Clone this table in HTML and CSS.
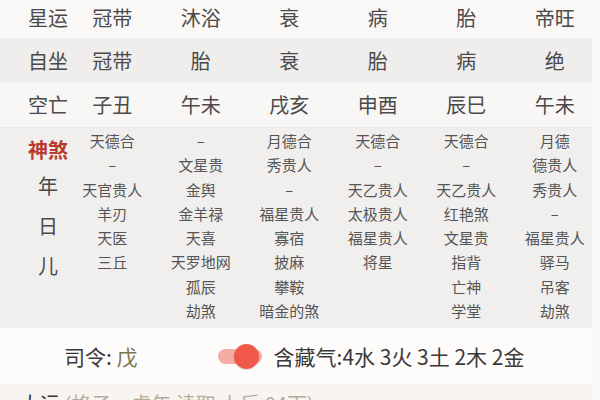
FILE: index.html
```html
<!DOCTYPE html>
<html lang="zh">
<head>
<meta charset="utf-8">
<link rel="stylesheet" href="styles.css">
</head>
<body>
<div class="page">
  <div class="row r1">
    <span class="lbl">星运</span><span>冠带</span><span>沐浴</span><span>衰</span><span>病</span><span>胎</span><span>帝旺</span>
  </div>
  <div class="row r2">
    <span class="lbl">自坐</span><span>冠带</span><span>胎</span><span>衰</span><span>胎</span><span>病</span><span>绝</span>
  </div>
  <div class="row r3">
    <span class="lbl">空亡</span><span>子丑</span><span>午未</span><span>戌亥</span><span>申酉</span><span>辰巳</span><span>午未</span>
  </div>
  <div class="shensha">
    <div class="lblcol"><span class="ss">神煞</span><span>年</span><span>日</span><span>儿</span></div>
    <div class="col"><span>天德合</span><span>–</span><span>天官贵人</span><span>羊刃</span><span>天医</span><span>三丘</span></div>
    <div class="col"><span>–</span><span>文星贵</span><span>金舆</span><span>金羊禄</span><span>天喜</span><span>天罗地网</span><span>孤辰</span><span>劫煞</span></div>
    <div class="col"><span>月德合</span><span>秀贵人</span><span>–</span><span>福星贵人</span><span>寡宿</span><span>披麻</span><span>攀鞍</span><span>暗金的煞</span></div>
    <div class="col"><span>天德合</span><span>–</span><span>天乙贵人</span><span>太极贵人</span><span>福星贵人</span><span>将星</span></div>
    <div class="col"><span>天德合</span><span>–</span><span>天乙贵人</span><span>红艳煞</span><span>文星贵</span><span>指背</span><span>亡神</span><span>学堂</span></div>
    <div class="col"><span>月德</span><span>德贵人</span><span>秀贵人</span><span>–</span><span>福星贵人</span><span>驿马</span><span>吊客</span><span>劫煞</span></div>
  </div>
  <div class="info">
    <span class="siling">司令: <em>戊</em></span>
    <span class="toggle"><span class="knob"></span></span>
    <span class="cang">含藏气:4水 3火 3土 2木 2金</span>
  </div>
  <div class="dayun"><span class="dy">大运</span> <span class="dyg">(格子，虚年 读取 上后 04下)</span></div>
</div>
</body>
</html>
```
FILE: styles.css
```css
* { box-sizing: border-box; }
html, body { margin: 0; padding: 0; }
body {
  width: 600px;
  height: 400px;
  overflow: hidden;
  background: #fbfaf9;
  font-family: "Noto Sans CJK SC", "Noto Sans", sans-serif;
  color: #4a4a4a;
}
.page { width: 592px; }
.row {
  display: grid;
  grid-template-columns: 68px repeat(6, 88.5px);
  align-items: center;
  font-size: 20px;
}
.row span { text-align: center; }
.row .lbl { padding-left: 28px; text-align: left; }
.r1 { height: 38px; background: #faf8f6; padding-bottom: 4px; }
.r2 { height: 44px; background: #f0eeec; }
.r3 { height: 46px; background: #f9f7f5; border-bottom: 1px solid #ebe8e5; }
.shensha {
  display: grid;
  grid-template-columns: 68px repeat(6, 88.5px);
  height: 200px;
  background: #f1efed;
  padding-top: 1px;
}
.lblcol {
  display: flex;
  flex-direction: column;
  align-items: center;
  padding-left: 28px;
  font-size: 20px;
  color: #4a4a4a;
}
.lblcol span { line-height: 40px; }
.lblcol .ss { color: #b93a31; font-weight: bold; line-height: 32px; margin-top: 5px; }
.col {
  display: flex;
  flex-direction: column;
  align-items: center;
  font-size: 15px;
  color: #555;
}
.col span { line-height: 24.3px; }
.info {
  height: 56px;
  background: #fdfcfb;
  display: flex;
  align-items: center;
  padding-left: 64px;
  font-size: 21px;
  color: #3a3a3a;
}
.siling em { font-style: normal; color: #7a7650; }
.toggle {
  position: relative;
  width: 44px;
  height: 15px;
  border-radius: 8px;
  background: #f5aca3;
  margin-left: 80px;
}
.knob {
  position: absolute;
  right: 3px;
  top: -5px;
  width: 25px;
  height: 25px;
  border-radius: 50%;
  background: #f0584a;
  box-shadow: 0 1px 2px rgba(0,0,0,0.15);
}
.cang { margin-left: 12px; }
.dayun {
  height: 20px;
  background: #f8f4f1;
  padding-left: 20px;
  padding-top: 8px;
  font-size: 20px;
  line-height: 24px;
  white-space: nowrap;
}
.dy { color: #333; }
.dyg { color: #b5ad9a; }
```
